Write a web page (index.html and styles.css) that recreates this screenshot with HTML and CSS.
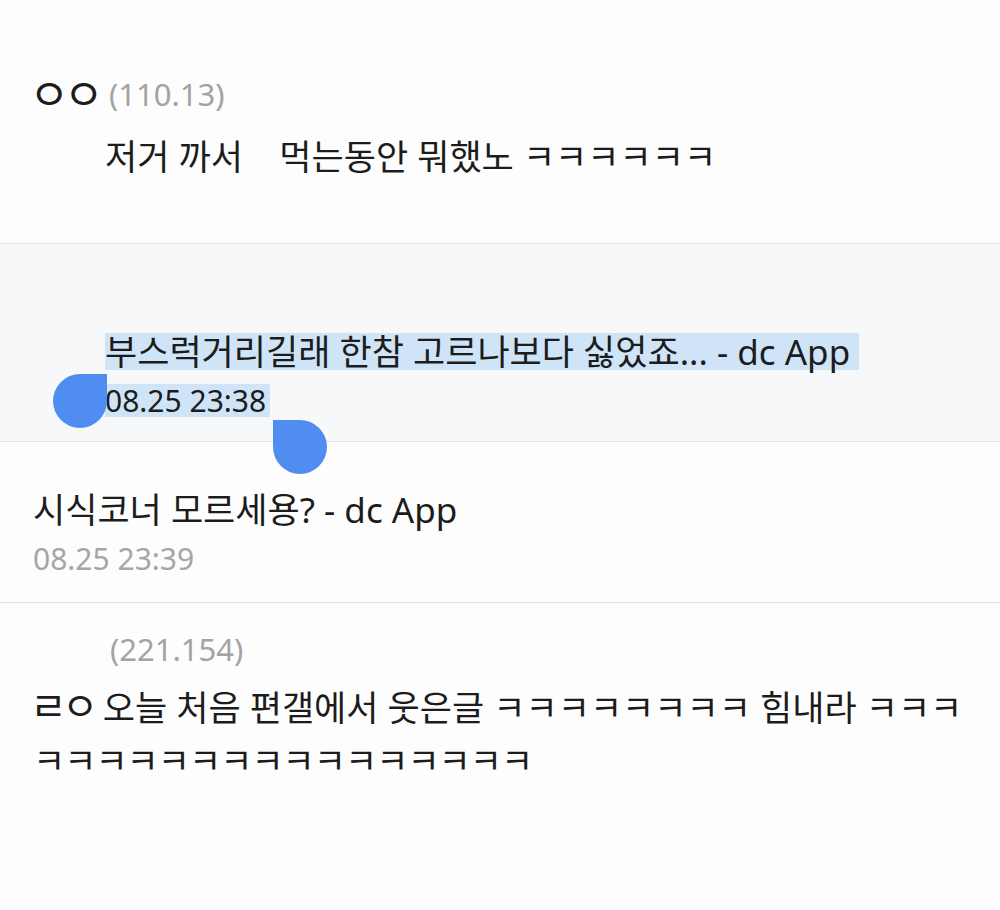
FILE: index.html
```html
<!DOCTYPE html>
<html lang="ko">

<head>
    <meta charset="UTF-8">
    <meta name="viewport" content="width=device-width, initial-scale=1.0">
    <title>댓글</title>
    <link rel="stylesheet" href="styles.css">
</head>

<body>

    <div class="comment first">
        <div class="meta"><span class="nick jamo">ㅇㅇ</span><span class="ip">(110.13)</span></div>
        <p class="text indent">저거 까서    먹는동안 뭐했노 ㅋㅋㅋㅋㅋㅋ</p>
    </div>

    <div class="comment reply">
        <p class="text indent"><span class="sel sel-main">부스럭거리길래 한참 고르나보다 싫었죠... - dc App </span></p>
        <p class="date dark indent"><span class="sel sel-date">08.25 23:38</span></p>
        <!-- selection handles -->
        <span class="handle handle-start"></span>
        <span class="handle handle-end"></span>
    </div>

    <div class="comment third">
        <p class="text">시식코너 모르세용? - dc App</p>
        <p class="date">08.25 23:39</p>
    </div>

    <div class="comment last">
        <div class="meta ip-only"><span class="ip">(221.154)</span></div>
        <p class="text long"><span class="jamo small">ㄹㅇ</span> 오늘 처음 편갤에서 웃은글 ㅋㅋㅋㅋㅋㅋㅋㅋ 힘내라 ㅋㅋㅋ<br><span class="kk">ㅋㅋㅋㅋㅋㅋㅋㅋㅋㅋㅋㅋㅋㅋㅋㅋ</span></p>
    </div>

</body>

</html>
```

FILE: styles.css
```css
/* Basic Reset */

* {
    box-sizing: border-box;
    margin: 0;
    padding: 0;
}

body {
    font-family: "Noto Sans", "Noto Sans CJK KR", sans-serif;
    background: #fdfdfd;
    color: #1c1c1c;
    font-size: 35px;
    width: 1000px;
    overflow: hidden;
}
/* Comment rows */

.comment {
    padding: 0 33px;
    border-bottom: 1px solid #dfe1e5;
}

.meta,
.text,
.date {
    line-height: 49px;
    white-space: pre;
}

.indent {
    padding-left: 72px;
}

.ip-only {
    padding-left: 77px;
}

.jamo {
    font-family: "Noto Sans CJK KR", sans-serif;
    font-size: 44px;
    letter-spacing: -6px;
    margin-left: -4px;
}

.jamo.small {
    font-size: 40px;
    letter-spacing: -5px;
    margin-left: -3px;
}

.nick {
    margin-right: 11px;
    vertical-align: -2px;
}

.ip {
    color: #a3a3a3;
    font-size: 31px;
}

.first .ip {
    vertical-align: 3px;
}

.date {
    color: #a6a6a6;
    font-size: 30px;
}

.date.dark {
    color: #1c1c1c;
}

.first {
    padding-top: 68px;
    padding-bottom: 62px;
}

.first .meta {
    height: 49px;
}

.first .text {
    margin-top: 15px;
}
/* Reply with selected text */

.reply {
    position: relative;
    background: #f7f8fa;
    padding-top: 83px;
    padding-bottom: 16px;
}

.sel {
    display: inline-block;
    background: #cfe5f7;
}

.sel-main {
    line-height: 37px;
}

.sel-date {
    line-height: 33px;
    padding-right: 4px;
}

.handle {
    position: absolute;
    width: 54px;
    height: 54px;
    background: #4f8ef0;
}

.handle-start {
    left: 53px;
    top: 130px;
    border-radius: 50% 0 50% 50%;
}

.handle-end {
    left: 273px;
    top: 176px;
    border-radius: 0 50% 50% 50%;
    z-index: 2;
}

.third {
    padding-top: 43px;
    padding-bottom: 19px;
}

.last {
    padding-top: 20px;
    padding-bottom: 120px;
    border-bottom: none;
}

.long {
    line-height: 53px;
    margin-top: 4px;
}

.kk {
    letter-spacing: -1px;
}
```
